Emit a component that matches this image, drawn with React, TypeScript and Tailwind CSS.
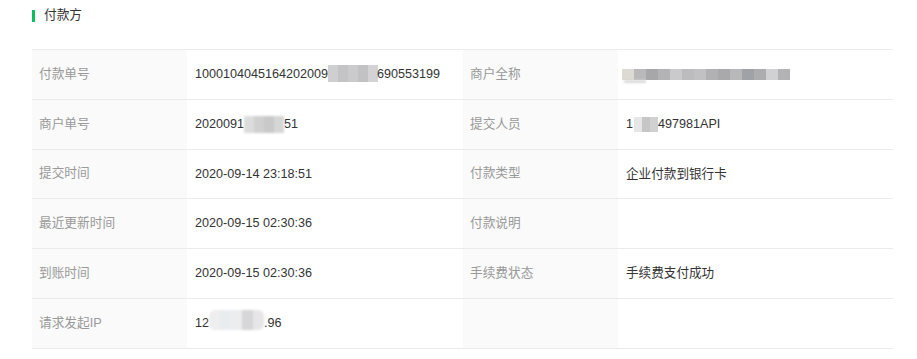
import React from "react";

const Mosaic = ({ shades, w, h, blur = false, cls = "" }: { shades: string[]; w: number; h: number; blur?: boolean; cls?: string }) => (
  <span className={`inline-flex align-middle ${cls}`} style={{ height: h, filter: blur ? "blur(1px)" : undefined }}>
    {shades.map((s, i) => (
      <span key={i} style={{ width: w, height: h, background: s }} />
    ))}
  </span>
);

const Label = ({ children, short = false }: { children?: React.ReactNode; short?: boolean }) => (
  <div className={`${short ? "h-[49px]" : "h-[50px]"} flex items-center pl-[7px] bg-[#fafafa] text-[#999] text-[12.7px] border-b border-[#ebebeb]`}>{children}</div>
);
const Value = ({ children, short = false }: { children?: React.ReactNode; short?: boolean }) => (
  <div className={`${short ? "h-[49px]" : "h-[50px]"} flex items-center pl-[8px] text-[#333] text-[12.6px] border-b border-[#ebebeb] whitespace-nowrap`}>{children}</div>
);

export default function App() {
  return (
    <div className="w-[917px] h-[359px] bg-white text-[13px]" style={{ fontFamily: '"Liberation Sans", "Noto Sans CJK SC", sans-serif' }}>
      <div className="h-[49px] pl-[32px] pt-[9px] flex items-start">
        <div className="flex items-center h-[14px]">
          <span className="w-[3px] h-[12px] bg-[#07c160]" />
          <span className="ml-[9px] text-[#333] text-[12.7px]">付款方</span>
        </div>
      </div>
      <div className="ml-[32px] w-[861px] border-t border-[#ebebeb] grid grid-cols-[155px_276px_155px_275px]">
        <Label>付款单号</Label>
        <Value>
          <span>1000104045164202009</span>
          <Mosaic cls="mt-[-2px]" w={10} h={17} shades={["#cfcfd2", "#c4c4c7", "#cbcbce", "#c2c2c5", "#d3d3d6"]} />
          <span className="ml-[-1px]">690553199</span>
        </Value>
        <Label>商户全称</Label>
        <Value>
          <span className="relative inline-flex ml-[-4px]">
            <Mosaic w={12} h={11} shades={["#ddd9d3", "#b9b9bb", "#a7a7a9", "#b3b3b5", "#cacacc", "#bcbcbe", "#c1c1c3", "#b1b1b3", "#a9a9ab", "#b8b8ba", "#9fa2a6", "#adadaf", "#d1d1d3", "#b3b3b5"]} />
            <span className="absolute left-[2px] top-[11px] w-[22px] h-[3px] bg-[#d9d9d9] blur-[1px]" />
          </span>
        </Value>

        <Label>商户单号</Label>
        <Value>
          <span>2020091</span>
          <Mosaic w={10} h={17} shades={["#dcdcdc", "#d0d0d0", "#c9c9c9", "#d6d6d6"]} blur />
          <span>51</span>
        </Value>
        <Label>提交人员</Label>
        <Value>
          <span>1</span>
          <Mosaic cls="ml-[1px]" w={8} h={15} shades={["#e6e6e6", "#c6c6c6", "#d1d1d1"]} />
          <span>497981API</span>
        </Value>

        <Label short>提交时间</Label>
        <Value short>2020-09-14 23:18:51</Value>
        <Label short>付款类型</Label>
        <Value short>企业付款到银行卡</Value>

        <Label>最近更新时间</Label>
        <Value>2020-09-15 02:30:36</Value>
        <Label>付款说明</Label>
        <Value />

        <Label>到账时间</Label>
        <Value>2020-09-15 02:30:36</Value>
        <Label>手续费状态</Label>
        <Value>手续费支付成功</Value>

        <Label>请求发起IP</Label>
        <Value>
          <span>12</span>
          <Mosaic cls="mt-[-8px] rounded-[6px] overflow-hidden" w={11} h={20} shades={["#eeeeef", "#e9ecef", "#ededee", "#d6d6d8", "#e6e6e8"]} blur />
          <span>.96</span>
        </Value>
        <Label />
        <Value />
      </div>
    </div>
  );
}
